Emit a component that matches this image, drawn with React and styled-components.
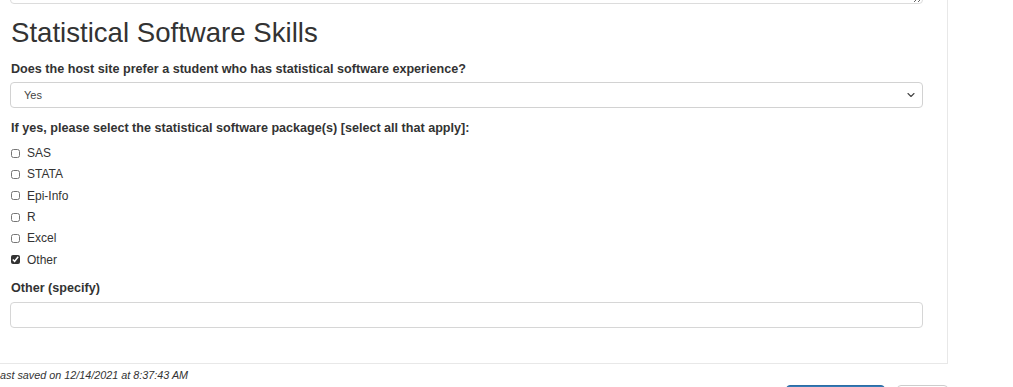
import React from 'react';
import styled, { createGlobalStyle } from 'styled-components';
import { ChevronDown } from 'lucide-react';

const GlobalStyle = createGlobalStyle`
  html, body {
    margin: 0;
    padding: 0;
    overflow: hidden;
    background: #fff;
  }
  body {
    font-family: "Liberation Sans", Arial, sans-serif;
    color: #333;
  }
`;

const Page = styled.div`
  margin-left: -8px;
  margin-top: -61px;
  width: 980px;
`;

const Panel = styled.div`
  box-sizing: border-box;
  width: 956px;
  border: 1px solid #e8e8e8;
  background: #fff;
  padding: 0 24px 35px 17px;
`;

const NotesArea = styled.textarea`
  display: block;
  box-sizing: border-box;
  width: 100%;
  height: 64px;
  border: 1px solid #dcdcdc;
  border-radius: 4px;
  font-family: inherit;
  font-size: 12px;
  resize: vertical;
`;

const Heading = styled.h3`
  margin: 14px 0 13px 1px;
  font-size: 27.6px;
  font-weight: 400;
  line-height: 1.1;
  color: #333;
`;

const FieldLabel = styled.label`
  display: block;
  margin: ${(p) => p.$top || 0}px 0 ${(p) => p.$bottom ?? 5}px 1px;
  font-size: 12.6px;
  font-weight: 700;
  line-height: 17px;
  color: #333;
`;

const SelectWrap = styled.div`
  position: relative;
`;

const Select = styled.select`
  display: block;
  box-sizing: border-box;
  width: 100%;
  height: 26px;
  padding: 0 13px;
  border: 1px solid #d2d2d2;
  border-radius: 4px;
  background: #fff;
  font-family: inherit;
  font-size: 11px;
  color: #444;
  appearance: none;
`;

const Caret = styled(ChevronDown)`
  position: absolute;
  right: 6px;
  top: 7px;
  width: 12px;
  height: 12px;
  color: #444;
  pointer-events: none;
`;

const CheckList = styled.div`
  display: flex;
  flex-direction: column;
`;

const CheckRow = styled.label`
  display: flex;
  align-items: center;
  height: 21.35px;
  padding-left: 1px;
  font-size: 12px;
  color: #333;
`;

const Box = styled.input`
  width: 9px;
  height: 9px;
  margin: 0 7px 0 0;
  accent-color: #333;
`;

const TextInput = styled.input`
  display: block;
  box-sizing: border-box;
  width: 100%;
  height: 26px;
  border: 1px solid #d6d6d6;
  border-radius: 4px;
  font-family: inherit;
  font-size: 12px;
`;

const Footer = styled.div`
  display: flex;
  justify-content: space-between;
  align-items: flex-start;
  width: 956px;
  padding-left: 2px;
  box-sizing: border-box;
`;

const SavedNote = styled.p`
  margin: 3px 0 0;
  font-size: 10.8px;
  font-style: italic;
  line-height: 16px;
  color: #333;
`;

const Actions = styled.div`
  display: flex;
  gap: 12px;
  margin-top: 21px;
`;

const Button = styled.button`
  box-sizing: border-box;
  width: ${(p) => p.$w}px;
  height: 34px;
  border-radius: 4px;
  border: 1px solid ${(p) => (p.$primary ? '#2e6da4' : '#ccc')};
  background: ${(p) => (p.$primary ? '#337ab7' : '#fff')};
  color: ${(p) => (p.$primary ? '#fff' : '#333')};
  font-family: inherit;
  font-size: 12px;
`;

const packages = ['SAS', 'STATA', 'Epi-Info', 'R', 'Excel', 'Other'];

export default function App() {
  return (
    <Page>
      <GlobalStyle />
      <Panel>
        <NotesArea defaultValue="" />
        <Heading>Statistical Software Skills</Heading>
        <FieldLabel $bottom={4}>Does the host site prefer a student who has statistical software experience?</FieldLabel>
        <SelectWrap>
          <Select defaultValue="Yes">
            <option>Yes</option>
            <option>No</option>
          </Select>
          <Caret strokeWidth={2.2} />
        </SelectWrap>
        <FieldLabel $top={12}>If yes, please select the statistical software package(s) [select all that apply]:</FieldLabel>
        <CheckList>
          {packages.map((name) => (
            <CheckRow key={name}>
              <Box type="checkbox" defaultChecked={name === 'Other'} />
              {name}
            </CheckRow>
          ))}
        </CheckList>
        <FieldLabel $top={10}>Other (specify)</FieldLabel>
        <TextInput type="text" />
      </Panel>
      <Footer>
        <SavedNote>Last saved on 12/14/2021 at 8:37:43 AM</SavedNote>
        <Actions>
          <Button $primary $w={99}>Save</Button>
          <Button $w={51}>Back</Button>
        </Actions>
      </Footer>
    </Page>
  );
}
